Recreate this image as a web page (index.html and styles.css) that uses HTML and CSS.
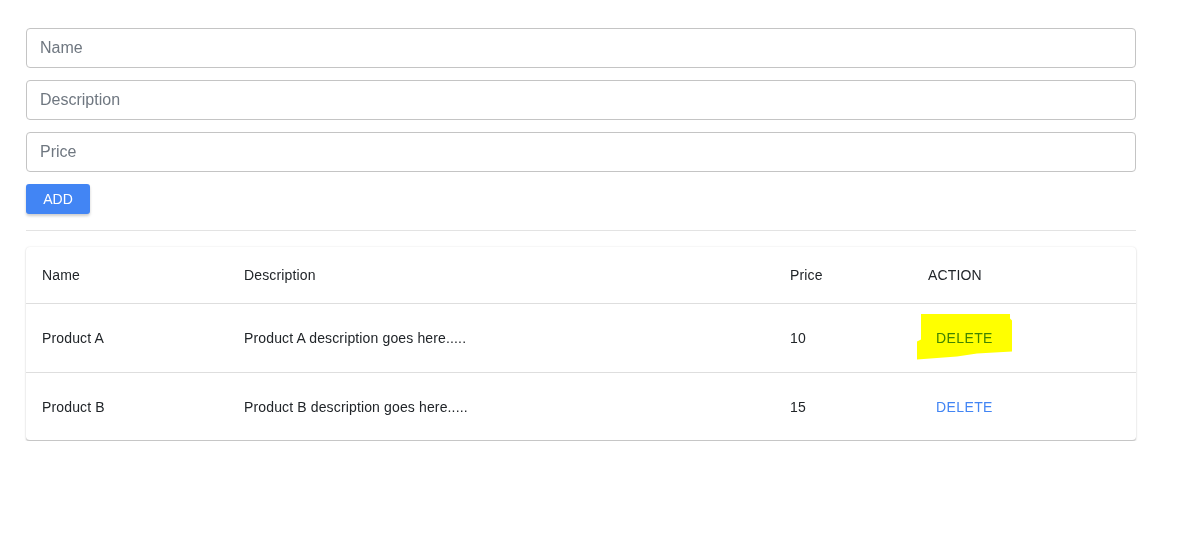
FILE: index.html
```html
<!DOCTYPE html>
<html>
<head>
<meta charset="utf-8">
<link rel="stylesheet" href="styles.css">
</head>
<body>
<div class="page">
  <form class="form">
    <input class="field" type="text" placeholder="Name">
    <input class="field" type="text" placeholder="Description">
    <input class="field" type="text" placeholder="Price">
    <div><button type="button" class="btn-add">ADD</button></div>
  </form>
  <hr class="divider">
  <div class="card">
    <table class="table">
      <colgroup>
        <col class="c-name"><col class="c-desc"><col class="c-price"><col class="c-action">
      </colgroup>
      <thead>
        <tr><th>Name</th><th>Description</th><th>Price</th><th>ACTION</th></tr>
      </thead>
      <tbody>
        <tr>
          <td>Product A</td><td>Product A description goes here.....</td><td>10</td>
          <td><span class="hl-wrap"><span class="highlight"></span><button type="button" class="btn-del">DELETE</button></span></td>
        </tr>
        <tr>
          <td>Product B</td><td>Product B description goes here.....</td><td>15</td>
          <td><button type="button" class="btn-del">DELETE</button></td>
        </tr>
      </tbody>
    </table>
  </div>
</div>
</body>
</html>
```
FILE: styles.css
```css
* { box-sizing: border-box; }
body {
  margin: 0;
  background: #fff;
  font-family: "Liberation Sans", Arial, sans-serif;
  color: #212529;
}
.page {
  width: 1110px;
  margin-left: 26px;
  padding-top: 28px;
}
.form {
  display: flex;
  flex-direction: column;
  gap: 12px;
  margin: 0;
}
.field {
  height: 40px;
  width: 100%;
  border: 1px solid #c4c4c4;
  border-radius: 4px;
  padding: 0 13px;
  font-family: inherit;
  font-size: 16px;
  color: #495057;
  outline: none;
}
.field::placeholder { color: #6f7780; }
.btn-add {
  width: 64px;
  height: 30px;
  border: none;
  border-radius: 3px;
  background: #4285f4;
  color: #fff;
  font-family: inherit;
  font-size: 14px;
  box-shadow: 0 2px 3px rgba(0,0,0,0.2);
  padding: 0;
}
.divider {
  border: none;
  border-top: 1px solid #e3e3e3;
  margin: 16px 0 16px;
  height: 0;
}
.card {
  border-radius: 4px;
  border-bottom: 1px solid #c6c6c6;
  box-shadow: 0 1px 2px rgba(0,0,0,0.15), 0 0 2px rgba(0,0,0,0.1);
  background: #fff;
}
.table {
  width: 100%;
  border-collapse: collapse;
  font-size: 14px;
  color: #212529;
  letter-spacing: 0.14px;
}
.c-name { width: 202px; }
.c-desc { width: 546px; }
.c-price { width: 138px; }
.table th {
  font-weight: normal;
  text-align: left;
  height: 56px;
  padding: 0 16px;
  border-bottom: 1px solid #dedede;
}
.table td {
  height: 69px;
  padding: 0 16px;
  border-bottom: 1px solid #dedede;
}
.table tbody tr:last-child td { border-bottom: none; height: 68px; padding-top: 1px; }
.btn-del {
  background: none;
  border: none;
  font-family: inherit;
  font-size: 14px;
  color: #4285f4;
  padding: 4px 8px;
  letter-spacing: 0.4px;
}
.hl-wrap {
  position: relative;
  display: inline-block;
}
.highlight {
  position: absolute;
  left: -11px;
  top: -12px;
  width: 95px;
  height: 46px;
  background: #ffff00;
  mix-blend-mode: multiply;
  clip-path: polygon(4px 0, 93px 0, 93px 5px, 95px 7px, 95px 38px, 60px 40px, 40px 43px, 0 46px, 0 28px, 4px 26px);
  z-index: 1;
  pointer-events: none;
}
```
